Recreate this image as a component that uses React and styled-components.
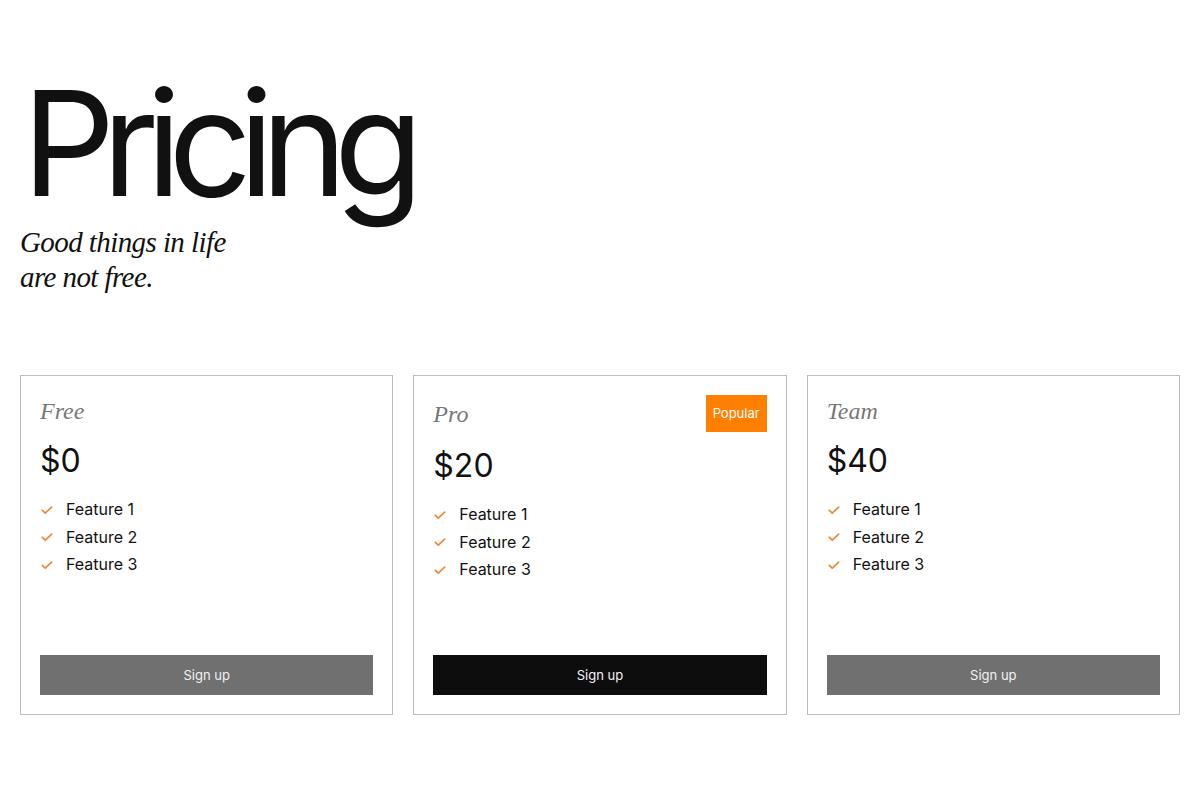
import React from "react";
import styled, { createGlobalStyle } from "styled-components";

const GlobalStyle = createGlobalStyle`
  html, body {
    margin: 0;
    padding: 0;
    background: #fff;
  }
  body {
    font-family: Inter, "Liberation Sans", sans-serif;
    color: #111;
  }
`;

const Page = styled.div`
  padding: 0 20px;
`;

const Title = styled.h1`
  margin: 70px 0 0;
  font-family: Inter, sans-serif;
  font-weight: 400;
  font-size: 146px;
  line-height: 146px;
  letter-spacing: -0.09em;
  color: #111;
  padding-left: 2px;
`;

const Tagline = styled.p`
  margin: 9px 0 0;
  font-family: "Liberation Serif", serif;
  font-style: italic;
  font-size: 29px;
  line-height: 35px;
  letter-spacing: -0.02em;
  color: #111;
`;

const Plans = styled.div`
  display: grid;
  grid-template-columns: repeat(3, 1fr);
  gap: 20px;
  margin-top: 80px;
`;

const Card = styled.div`
  height: 340px;
  box-sizing: border-box;
  border: 1px solid #bdbdbd;
  padding: 19px;
  display: flex;
  flex-direction: column;
`;

const CardHead = styled.div`
  display: flex;
  justify-content: space-between;
  align-items: center;
  min-height: 32px;
  margin-bottom: 14px;
`;

const PlanName = styled.div`
  font-family: "Liberation Serif", serif;
  font-style: italic;
  font-size: 24px;
  line-height: 32px;
  color: #777;
`;

const Badge = styled.span`
  background: #ff8000;
  color: #fff;
  font-size: 13px;
  line-height: 17px;
  padding: 10px 7px;
`;

const Price = styled.div`
  font-size: 32px;
  line-height: 40px;
  color: #111;
`;

const Features = styled.ul`
  list-style: none;
  margin: 15px 0 0;
  padding: 0;
`;

const Feature = styled.li`
  display: flex;
  align-items: center;
  gap: 12px;
  font-size: 16px;
  line-height: 27.5px;
  color: #111;
  svg {
    flex: none;
  }
`;

const Button = styled.button`
  margin-top: auto;
  height: 40px;
  border: none;
  border-radius: 0;
  font-family: Inter, sans-serif;
  font-size: 13px;
  color: #f2f2f2;
  background: ${(p) => (p.$primary ? "#0d0d0d" : "#707070")};
  cursor: pointer;
`;

const Check = () => (
  <svg width="14" height="14" viewBox="0 0 24 24" fill="none" stroke="#ec8a3c" strokeWidth="3" strokeLinecap="round" strokeLinejoin="round">
    <path d="M4 12.5l5 5L20 7" />
  </svg>
);

const plans = [
  { name: "Free", price: "$0" },
  { name: "Pro", price: "$20", popular: true },
  { name: "Team", price: "$40" },
];

const App = () => {
  return (
    <>
      <GlobalStyle />
      <Page>
        <Title>Pricing</Title>
        <Tagline>
          Good things in life
          <br />
          are not free.
        </Tagline>
        <Plans>
          {plans.map((plan) => (
            <Card key={plan.name}>
              <CardHead>
                <PlanName>{plan.name}</PlanName>
                {plan.popular && <Badge>Popular</Badge>}
              </CardHead>
              <Price>{plan.price}</Price>
              <Features>
                {["Feature 1", "Feature 2", "Feature 3"].map((f) => (
                  <Feature key={f}>
                    <Check />
                    {f}
                  </Feature>
                ))}
              </Features>
              <Button $primary={plan.popular}>Sign up</Button>
            </Card>
          ))}
        </Plans>
      </Page>
    </>
  );
};

export default App;
